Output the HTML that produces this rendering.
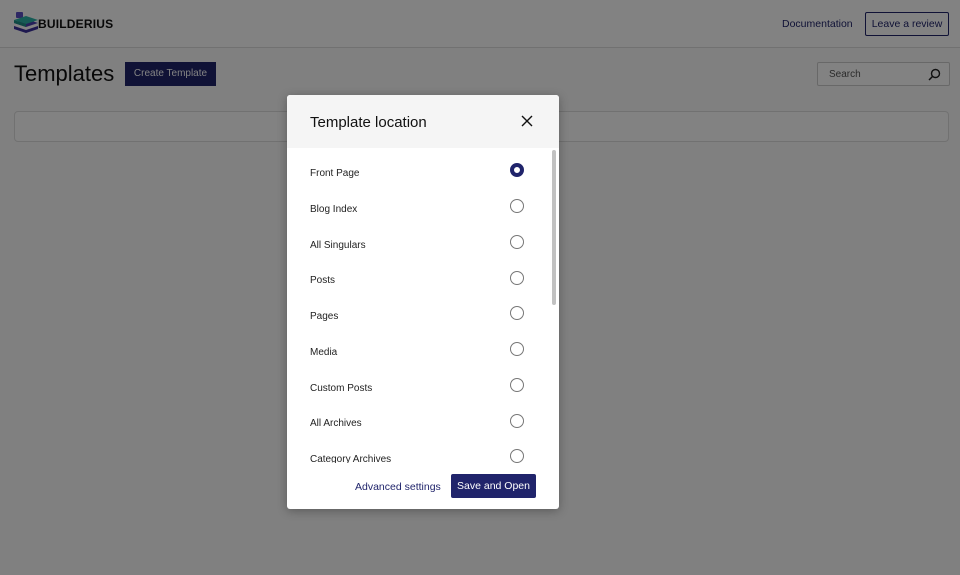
<!DOCTYPE html>
<html><head><style>
*{box-sizing:border-box;margin:0;padding:0}
body{width:960px;height:575px;overflow:hidden;font-family:"Liberation Sans",sans-serif;background:#fbfbfb;position:relative}
.hdr{position:absolute;left:0;top:0;width:960px;height:48px;background:#fff;border-bottom:1px solid #ddd}
.logo{position:absolute;left:14px;top:12px}
.brand{position:absolute;left:38px;top:17px;font-weight:bold;font-size:12px;color:#111;letter-spacing:.2px}
.doc{position:absolute;left:782px;top:18px;font-size:10.5px;color:#20246b}
.rev{position:absolute;left:865px;top:12px;width:84px;height:24px;border:1px solid #20246b;font-size:10.5px;color:#20246b;text-align:center;line-height:22px;border-radius:2px}
h1{position:absolute;left:14px;top:61px;font-weight:normal;font-size:22px;color:#111}
.ct{position:absolute;left:125px;top:62px;width:91px;height:24px;background:#20246b;color:#fff;font-size:10px;text-align:center;line-height:24px}
.search{position:absolute;left:817px;top:62px;width:133px;height:24px;border:1px solid #ccc;background:#fff;border-radius:2px;font-size:10px;color:#555;padding:6px 11px}
.bar{position:absolute;left:14px;top:111px;width:935px;height:31px;border:1px solid #ddd;border-radius:4px;background:#fff}
.ov{position:absolute;inset:0;background:rgba(0,0,0,.49)}
.modal{position:absolute;left:287px;top:95px;width:272px;height:414px;background:#fff;border-radius:3px;overflow:hidden;box-shadow:0 2px 10px rgba(0,0,0,.3)}
.mh{height:53px;background:#f5f5f5;padding:19px 23px;font-size:15px;color:#111}
.x{position:absolute;right:26px;top:20px}
.body{position:absolute;top:53px;left:0;width:272px;height:315px;overflow:hidden}
.row{position:absolute;left:23px;font-size:10px;color:#222}
.rad{position:absolute;left:223px;width:14px;height:14px;border:1px solid #777;border-radius:50%;background:#fff}
.rad.on{border:4px solid #20246b}
.sb{position:absolute;left:265px;top:55px;width:4px;height:155px;background:#c1c1c1;border-radius:2px}
.adv{position:absolute;left:68px;top:386px;font-size:10.5px;color:#20246b}
.save{position:absolute;left:164px;top:379px;width:85px;height:24px;background:#20246b;color:#fff;font-size:10.5px;text-align:center;line-height:24px;border-radius:2px}
</style></head><body>
<div class="hdr">
<svg class="logo" width="24" height="22" viewBox="0 0 24 22"><rect x="2" y="0" width="7" height="6" rx="1" fill="#5b4fc4"/><polygon points="0,11 12,15 24,11 12,7" fill="#4b3fb0"/><polygon points="0,14 12,18 24,14 24,17 12,21 0,17" fill="#3b2f9c"/><polygon points="0,8 12,12 24,8 12,4" fill="#2bb3a7"/><polygon points="0,8 12,12 12,15 0,11" fill="#1f8f86"/></svg>
<div class="brand">BUILDERIUS</div>
<div class="doc">Documentation</div>
<div class="rev">Leave a review</div>
</div>
<h1>Templates</h1>
<div class="ct">Create Template</div>
<div class="search">Search<svg style="position:absolute;right:8px;top:5px" width="13" height="13" viewBox="0 0 13 13"><circle cx="7.5" cy="5.5" r="4" fill="none" stroke="#222" stroke-width="1.4"/><line x1="4.6" y1="8.4" x2="1" y2="12" stroke="#222" stroke-width="1.5"/></svg></div>
<div class="bar"></div>
<div class="ov"></div>
<div class="modal">
<div class="mh">Template location</div>
<svg class="x" width="12" height="12" viewBox="0 0 12 12"><path d="M1 1L11 11M11 1L1 11" stroke="#111" stroke-width="1.4"/></svg>
<div class="body">
<div class="row" style="top:20px">Front Page</div><div class="rad on" style="top:15px"></div>
<div class="row" style="top:56px">Blog Index</div><div class="rad" style="top:51px"></div>
<div class="row" style="top:92px">All Singulars</div><div class="rad" style="top:87px"></div>
<div class="row" style="top:127px">Posts</div><div class="rad" style="top:123px"></div>
<div class="row" style="top:163px">Pages</div><div class="rad" style="top:158px"></div>
<div class="row" style="top:199px">Media</div><div class="rad" style="top:194px"></div>
<div class="row" style="top:235px">Custom Posts</div><div class="rad" style="top:230px"></div>
<div class="row" style="top:270px">All Archives</div><div class="rad" style="top:266px"></div>
<div class="row" style="top:306px">Category Archives</div><div class="rad" style="top:301px"></div>
</div>
<div class="sb"></div>
<div class="adv">Advanced settings</div>
<div class="save">Save and Open</div>
</div>
</body></html>
